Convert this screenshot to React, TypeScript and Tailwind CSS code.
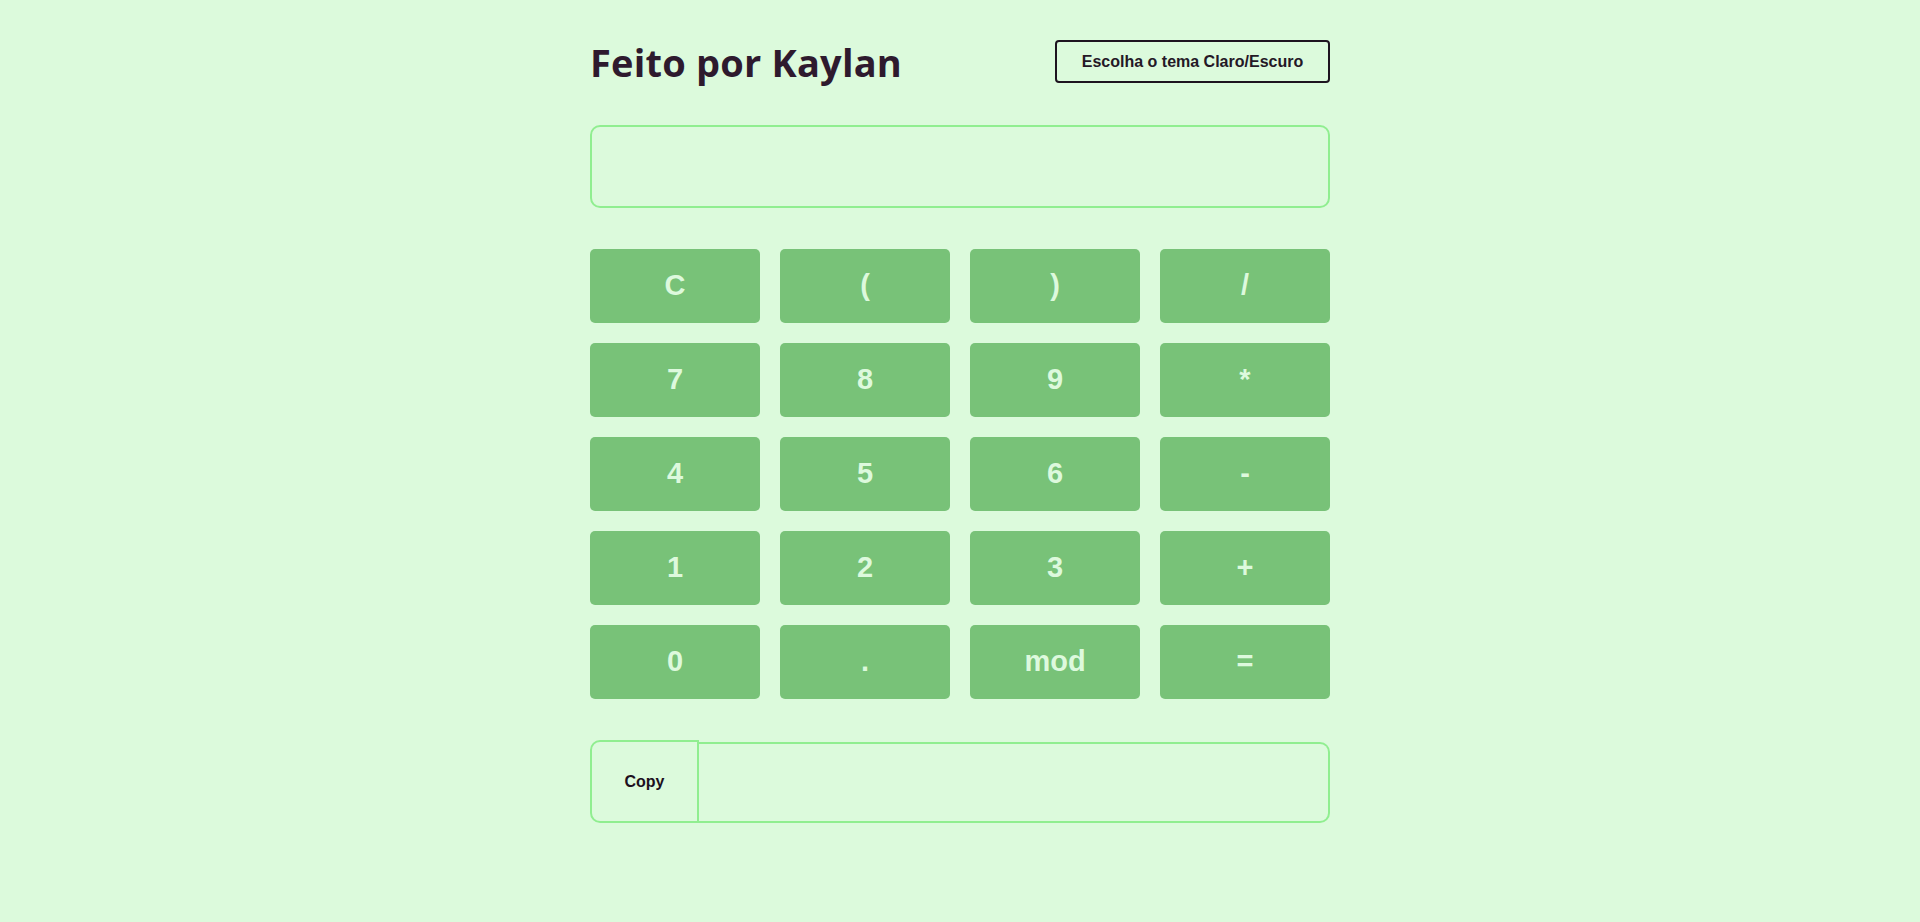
import { useState } from "react";

const keys = [
  "C", "(", ")", "/",
  "7", "8", "9", "*",
  "4", "5", "6", "-",
  "1", "2", "3", "+",
  "0", ".", "mod", "=",
];

function Key({ label, onClick }: { label: string; onClick: () => void }) {
  return (
    <button
      onClick={onClick}
      className="h-[74px] rounded-[5px] bg-[#78c278] text-[#ddf9dd] text-[29px] font-bold cursor-pointer hover:bg-[#6ab66a]"
      style={{ fontFamily: "'Liberation Sans', Arial, sans-serif" }}
    >
      {label}
    </button>
  );
}

export default function App() {
  const [expr, setExpr] = useState("");
  const [result, setResult] = useState("");

  const press = (k: string) => {
    if (k === "C") {
      setExpr("");
      return;
    }
    if (k === "=") {
      try {
        const v = Function(`return (${expr.replace(/mod/g, "%")})`)();
        setResult(String(v));
        setExpr(String(v));
      } catch {
        setResult("Erro");
      }
      return;
    }
    setExpr(expr + k);
  };

  return (
    <div className="min-h-[922px] w-full bg-[#dcfadc]">
      <div className="mx-auto w-[740px] pt-10">
        <div className="flex items-center justify-between">
          <h1
            className="text-[38px] font-bold leading-none text-[#2e1a2e] tracking-[0.2px]"
            style={{ fontFamily: "'Open Sans', 'Noto Sans', sans-serif" }}
          >
            Feito por Kaylan
          </h1>
          <button
            className="h-[43px] w-[275px] rounded-[4px] border-2 border-[#1e1420] text-[16px] font-bold text-[#241826] cursor-pointer"
            style={{ fontFamily: "'Liberation Sans', Arial, sans-serif" }}
          >
            Escolha o tema Claro/Escuro
          </button>
        </div>

        <input
          value={expr}
          readOnly
          className="mt-[42px] block h-[83px] w-full rounded-[10px] border-2 border-[#90ee90] bg-transparent px-4 text-[28px] text-[#2e1a2e] outline-none"
        />

        <div className="mt-[41px] grid grid-cols-4 gap-5">
          {keys.map((k) => (
            <Key key={k} label={k} onClick={() => press(k)} />
          ))}
        </div>

        <div className="mt-[41px] flex h-[83px]">
          <button
            onClick={() => navigator.clipboard?.writeText(result)}
            className="w-[109px] shrink-0 rounded-l-[10px] border-2 border-[#90ee90] text-[16px] font-bold text-[#1c1020] cursor-pointer"
            style={{ fontFamily: "'Liberation Sans', Arial, sans-serif" }}
          >
            Copy
          </button>
          <input
            value={result}
            readOnly
            className="mt-[2px] h-[81px] grow rounded-r-[10px] border-2 border-l-0 border-[#90ee90] bg-transparent px-4 text-[20px] outline-none"
          />
        </div>
      </div>
    </div>
  );
}
